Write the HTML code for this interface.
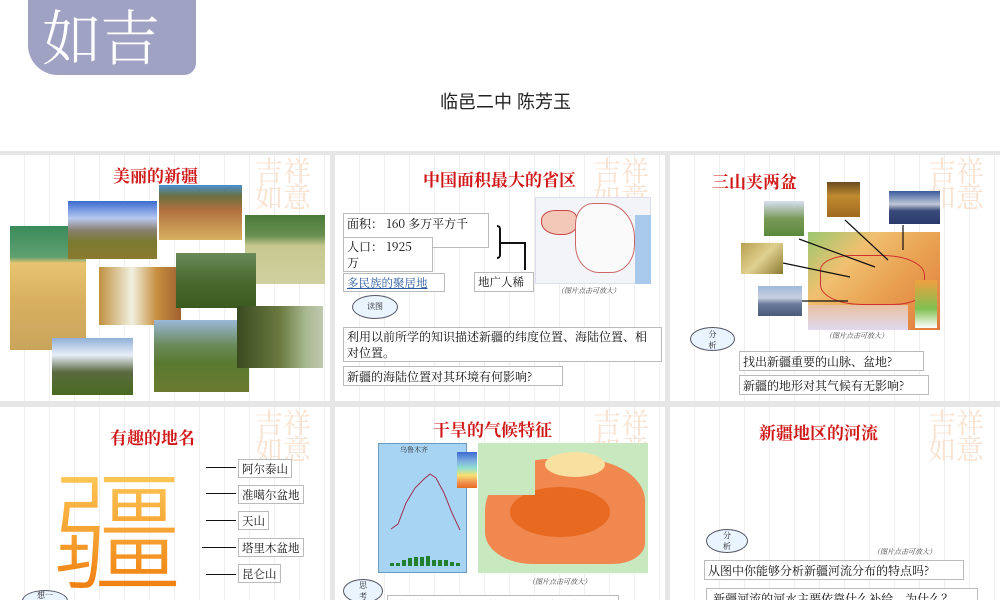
<!DOCTYPE html>
<html><head><meta charset="utf-8"><style>
*{margin:0;padding:0;box-sizing:border-box}
body{width:1000px;height:600px;overflow:hidden;background:#e6e6e6;position:relative;font-family:"Liberation Serif","Noto Serif CJK SC",serif}
.a{position:absolute}
.top{left:0;top:0;width:1000px;height:151px;background:#fff}
.p{position:absolute;background:#fff;overflow:hidden;
background-image:repeating-linear-gradient(90deg,transparent 0,transparent 24px,#efefef 24px,#efefef 25px)}
.t{position:absolute;color:#d01818;font-size:17px;font-weight:bold;white-space:nowrap;font-family:"Noto Serif CJK SC",serif}
.b{position:absolute;border:1px solid #bbb;background:#fff;font-size:11.5px;padding:1px 3px;white-space:nowrap;color:#111;font-family:"Noto Serif CJK SC",serif}
.ph{position:absolute}
.cap{position:absolute;font-size:7px;font-style:italic;color:#333;white-space:nowrap;font-family:"Noto Serif CJK SC",serif}
.cl{position:absolute;background:#eaf4ff;border:1px solid #556;border-radius:50%;font-size:8px;text-align:center;color:#222;font-family:"Noto Serif CJK SC",serif}
.wm{position:absolute;color:#f8e2d0;font-size:28px;font-family:"Noto Serif CJK SC",serif;line-height:26px;white-space:nowrap}
.ln{position:absolute;height:1px;background:#111}
</style></head><body>
<div class="a top">
 <div class="a" style="left:28px;top:0;width:168px;height:75px;background:#9fa2c2;border-radius:0 0 12px 30px"></div>
 <div class="a" style="left:42px;top:2px;font-size:60px;color:#fff;font-family:'Noto Serif CJK SC',serif;line-height:66px;letter-spacing:-2px;font-weight:300">如吉</div>
 <div class="a" style="left:440px;top:88px;font-size:18px;color:#222;font-family:'Liberation Sans','Noto Sans CJK SC',sans-serif">临邑二中 陈芳玉</div>
</div>

<!-- panel 1 -->
<div class="p" style="left:0;top:155px;width:330px;height:246px">
 <div class="wm" style="left:255px;top:2px">吉祥<br>如意</div>
 <div class="t" style="left:113px;top:7px">美丽的新疆</div>
 <div class="ph" style="left:10px;top:71px;width:76px;height:124px;background:linear-gradient(#3a8a5a 0,#5fa070 25%,#e8c470 30%,#d8b060 60%,#c9a55c 100%)"></div>
 <div class="ph" style="left:68px;top:46px;width:89px;height:58px;background:linear-gradient(#3a6ad0 0,#b8c8f0 30%,#8a8070 50%,#7a7a30 70%,#8a7a30 100%)"></div>
 <div class="ph" style="left:159px;top:30px;width:83px;height:55px;background:linear-gradient(#4a90d0 0,#6a7040 20%,#b07040 45%,#d8b060 100%)"></div>
 <div class="ph" style="left:245px;top:60px;width:80px;height:69px;background:linear-gradient(#4a7a3a 0,#6a9050 30%,#c8c890 45%,#d0d0a0 100%)"></div>
 <div class="ph" style="left:99px;top:112px;width:82px;height:58px;background:linear-gradient(90deg,#c09040,#f0f0e0 40%,#c89040 70%,#a06030)"></div>
 <div class="ph" style="left:176px;top:98px;width:80px;height:55px;background:linear-gradient(#6a8a5a,#4a6a30 50%,#3a5a20)"></div>
 <div class="ph" style="left:52px;top:183px;width:81px;height:57px;background:linear-gradient(#90b0d8 0,#e8eef8 30%,#5a6a40 60%,#4a6a20)"></div>
 <div class="ph" style="left:154px;top:165px;width:95px;height:72px;background:linear-gradient(#9ab8d8 0,#6a8a5a 35%,#5a7a30 60%,#6a7a30)"></div>
 <div class="ph" style="left:237px;top:151px;width:86px;height:62px;background:linear-gradient(90deg,#3a4a20,#6a7a40 50%,#a8b890 80%,#c0c8b0)"></div>
</div>

<!-- panel 2 -->
<div class="p" style="left:335px;top:155px;width:330px;height:246px">
 <div class="wm" style="left:258px;top:2px">吉祥<br>如意</div>
 <div class="t" style="left:88px;top:11px">中国面积最大的省区</div>
 <div class="b" style="left:8px;top:58px;width:146px;height:35px;font-size:12px">面积： 160 多万平方千</div>
 <div class="b" style="left:8px;top:82px;width:90px;height:35px;font-size:12px;line-height:16px">人口： 1925<br>万</div>
 <div class="b" style="left:8px;top:118px;width:102px;height:19px;color:#2a5aa0;text-decoration:underline">多民族的聚居地</div>
 <div class="b" style="left:139px;top:117px;width:60px;height:20px">地广人稀</div>
 <div class="a" style="left:162px;top:70px;width:4px;height:34px;border:2px solid #111;border-left:none;border-radius:0 6px 6px 0"></div>
 <div class="ln" style="left:166px;top:87px;width:24px;height:2px"></div>
 <div class="a" style="left:189px;top:87px;width:2px;height:28px;background:#111"></div>
 <div class="a" style="left:200px;top:42px;width:116px;height:87px;background:#f2f4f8;border:1px solid #dde"></div>
 <div class="a" style="left:206px;top:55px;width:36px;height:25px;background:#f3c8b8;border:1px solid #c44;border-radius:40% 30% 40% 50%"></div>
 <div class="a" style="left:240px;top:48px;width:60px;height:70px;border:1px solid #c66;border-radius:30% 50% 40% 40%;background:#fafafa"></div>
 <div class="a" style="left:300px;top:60px;width:16px;height:69px;background:#a8c8ec"></div>
 <div class="cap" style="left:222px;top:131px">（图片点击可放大）</div>
 <div class="cl" style="left:17px;top:140px;width:46px;height:24px;line-height:22px">读图</div>
 <div class="b" style="left:8px;top:172px;width:319px;height:35px;font-size:12px;line-height:16px;white-space:normal">利用以前所学的知识描述新疆的纬度位置、海陆位置、相对位置。</div>
 <div class="b" style="left:8px;top:211px;width:220px;height:20px;font-size:12px">新疆的海陆位置对其环境有何影响?</div>
</div>

<!-- panel 3 -->
<div class="p" style="left:670px;top:155px;width:330px;height:246px">
 <div class="wm" style="left:258px;top:2px">吉祥<br>如意</div>
 <div class="t" style="left:42px;top:13px">三山夹两盆</div>
 <div class="a" style="left:138px;top:77px;width:132px;height:98px;background:linear-gradient(135deg,#9ac870 0,#f0c070 30%,#e8a050 60%,#e07a40 100%)"></div>
 <div class="a" style="left:150px;top:100px;width:105px;height:50px;border:1px solid #d03030;border-radius:30% 40% 30% 40%"></div>
 <div class="a" style="left:138px;top:150px;width:100px;height:25px;background:linear-gradient(#e8c0a0,#e0d8f0)"></div>
 <div class="a" style="left:245px;top:125px;width:22px;height:48px;background:linear-gradient(#f0a040,#80c050 60%,#fff)"></div>
 <div class="ph" style="left:94px;top:46px;width:40px;height:35px;background:linear-gradient(#d8e0f0,#7a9a5a 50%,#5a8a3a)"></div>
 <div class="ph" style="left:157px;top:27px;width:33px;height:35px;background:linear-gradient(#6a4a20,#c08a30 40%,#a06a20)"></div>
 <div class="ph" style="left:219px;top:36px;width:51px;height:33px;background:linear-gradient(#3a5a9a,#c0c8d8 40%,#3a4a7a 60%,#2a3a6a)"></div>
 <div class="ph" style="left:71px;top:88px;width:42px;height:31px;background:linear-gradient(135deg,#b8a050,#e0d090 50%,#8a7a30)"></div>
 <div class="ph" style="left:88px;top:131px;width:44px;height:30px;background:linear-gradient(#a0b8d8,#c8d0e0 40%,#6a7a9a 60%,#4a5a7a)"></div>
 <svg class="a" style="left:0;top:0" width="330" height="246"><g stroke="#111" stroke-width="1.2" fill="none"><line x1="129" y1="84" x2="205" y2="112"/><line x1="113" y1="108" x2="180" y2="122"/><line x1="132" y1="146" x2="178" y2="146"/><line x1="175" y1="65" x2="218" y2="105"/><line x1="233" y1="70" x2="233" y2="95"/></g></svg>
 <div class="cap" style="left:155px;top:176px">（图片点击可放大）</div>
 <div class="cl" style="left:20px;top:172px;width:45px;height:24px;line-height:11px;padding-top:1px">分<br>析</div>
 <div class="b" style="left:69px;top:196px;width:185px;height:20px;font-size:12px">找出新疆重要的山脉、盆地?</div>
 <div class="b" style="left:69px;top:220px;width:190px;height:20px;font-size:12px">新疆的地形对其气候有无影响?</div>
</div>

<!-- panel 4 -->
<div class="p" style="left:0;top:407px;width:330px;height:193px">
 <div class="wm" style="left:255px;top:2px">吉祥<br>如意</div>
 <div class="t" style="left:110px;top:17px">有趣的地名</div>
 <div class="a" style="left:52px;top:52px;font-size:130px;line-height:130px;font-weight:300;color:#f5a623;font-family:'Noto Sans CJK SC',sans-serif;background:linear-gradient(#ffd060,#f08010);-webkit-background-clip:text;background-clip:text;-webkit-text-fill-color:transparent">疆</div>
 <div class="ln" style="left:206px;top:60px;width:30px"></div>
 <div class="ln" style="left:206px;top:86px;width:30px"></div>
 <div class="ln" style="left:206px;top:113px;width:30px"></div>
 <div class="ln" style="left:202px;top:140px;width:34px"></div>
 <div class="ln" style="left:206px;top:167px;width:30px"></div>
 <div class="b" style="left:238px;top:52px;height:19px">阿尔泰山</div>
 <div class="b" style="left:238px;top:78px;height:19px">准噶尔盆地</div>
 <div class="b" style="left:238px;top:104px;height:19px">天山</div>
 <div class="b" style="left:238px;top:131px;height:19px">塔里木盆地</div>
 <div class="b" style="left:238px;top:157px;height:19px">昆仑山</div>
 <div class="cl" style="left:22px;top:183px;width:46px;height:22px;line-height:10px">想一</div>
</div>

<!-- panel 5 -->
<div class="p" style="left:335px;top:407px;width:330px;height:193px">
 <div class="wm" style="left:258px;top:2px">吉祥<br>如意</div>
 <div class="t" style="left:98px;top:9px">干旱的气候特征</div>
 <div class="a" style="left:43px;top:36px;width:89px;height:130px;background:#a8d4f4;border:1px solid #6a9ac0"></div>
 <div class="a" style="left:65px;top:38px;font-size:7px;color:#333">乌鲁木齐</div>
 <svg class="a" style="left:43px;top:36px" width="89" height="130"><polyline points="13,86 20,81 28,60 37,45 46,36 52,31 58,35 66,50 74,70 82,87" fill="none" stroke="#a03050" stroke-width="1"/><g fill="#208030"><rect x="12" y="120" width="4" height="3"/><rect x="18" y="120" width="4" height="3"/><rect x="24" y="117" width="4" height="6"/><rect x="30" y="115" width="4" height="8"/><rect x="36" y="114" width="4" height="9"/><rect x="42" y="114" width="4" height="9"/><rect x="48" y="113" width="4" height="10"/><rect x="54" y="117" width="4" height="6"/><rect x="60" y="117" width="4" height="6"/><rect x="66" y="117" width="4" height="6"/><rect x="72" y="119" width="4" height="4"/><rect x="78" y="120" width="4" height="3"/></g></svg>
 <div class="a" style="left:143px;top:36px;width:170px;height:130px;background:#c8e8c0"></div>
 <div class="a" style="left:150px;top:52px;width:160px;height:105px;background:#f08850;border-radius:40% 40% 20% 30%/50% 40% 20% 30%"></div>
 <div class="a" style="left:175px;top:80px;width:100px;height:50px;background:#e86a20;border-radius:50%"></div>
 <div class="a" style="left:210px;top:45px;width:60px;height:25px;background:#f8e0a0;border-radius:50%"></div>
 <div class="a" style="left:150px;top:36px;width:50px;height:52px;background:#c8e8c0"></div>
 <div class="a" style="left:122px;top:45px;width:20px;height:36px;background:linear-gradient(#3a6ad0,#80aee0 25%,#90e0d0 45%,#f8e070 65%,#f09050 85%,#e86a20)"></div>
 <div class="cap" style="left:193px;top:170px">（图片点击可放大）</div>
 <div class="cl" style="left:8px;top:172px;width:40px;height:24px;line-height:11px">思<br>考</div>
 <div class="b" style="left:52px;top:188px;width:232px;height:20px;font-size:12px">新疆的气候特征？其形成原因有哪些？</div>
</div>

<!-- panel 6 -->
<div class="p" style="left:670px;top:407px;width:330px;height:193px">
 <div class="wm" style="left:258px;top:2px">吉祥<br>如意</div>
 <div class="t" style="left:89px;top:12px">新疆地区的河流</div>
 <div class="cl" style="left:36px;top:122px;width:42px;height:24px;line-height:11px">分<br>析</div>
 <div class="cap" style="left:203px;top:140px">（图片点击可放大）</div>
 <div class="b" style="left:34px;top:153px;width:260px;height:20px;font-size:12px">从图中你能够分析新疆河流分布的特点吗?</div>
 <div class="b" style="left:36px;top:181px;width:272px;height:20px;font-size:12px">&nbsp;新疆河流的河水主要依靠什么补给，为什么？</div>
</div>
</body></html>
